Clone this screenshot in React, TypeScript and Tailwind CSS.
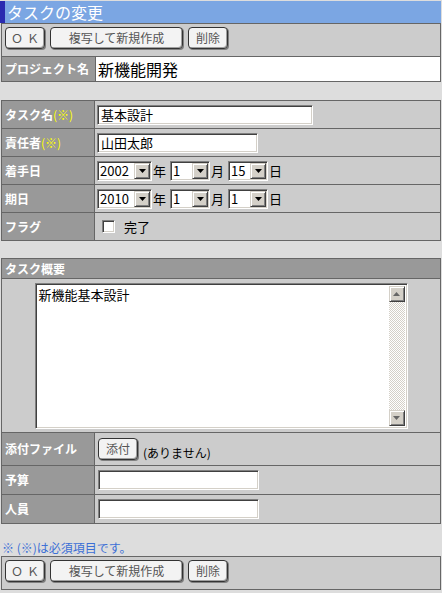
import type { ReactNode } from 'react'

const sunken =
  'bg-white border border-t-[#808080] border-l-[#808080] border-b-white border-r-white shadow-[inset_1px_1px_0_#404040,inset_-1px_-1px_0_#d4d0c8]'
const raised =
  'bg-[#d4d0c8] border border-t-[#d4d0c8] border-l-[#d4d0c8] border-b-[#404040] border-r-[#404040] shadow-[inset_1px_1px_0_#ffffff,inset_-1px_-1px_0_#808080]'

function Btn({ children, w }: { children: ReactNode; w: string }) {
  return (
    <button
      className={`${w} h-[22px] rounded-[4px] border border-[#333] bg-[#f3f3f3] shadow-[inset_-1px_-1px_0_#a0a0a0,1px_1px_0_#808080] text-[12px] leading-none text-[#555] flex items-center justify-center`}
    >
      {children}
    </button>
  )
}

function Toolbar() {
  return (
    <div className="flex gap-[5px] pl-[3px] pt-[3px] h-[32px]">
      <Btn w="w-[40px]">
        <span className="tracking-[4px] pl-[4px]">ＯＫ</span>
      </Btn>
      <Btn w="w-[133px]">複写して新規作成</Btn>
      <Btn w="w-[40px]">削除</Btn>
    </div>
  )
}

function Arrow({ up, color = '#000' }: { up?: boolean; color?: string }) {
  return (
    <svg width="7" height="4" viewBox="0 0 7 4">
      <polygon points={up ? '3.5,0 7,4 0,4' : '0,0 7,0 3.5,4'} fill={color} />
    </svg>
  )
}

function Select({ value, w }: { value: string; w: string }) {
  return (
    <div className={`${w} h-[20px] flex ${sunken} p-[1px]`}>
      <span className="flex-1 pl-[1px] text-[13px] leading-[16px] text-black">{value}</span>
      <span className={`w-[16px] h-[16px] ${raised} flex items-center justify-center`}>
        <Arrow />
      </span>
    </div>
  )
}

function DateRow({ y, m, d }: { y: string; m: string; d: string }) {
  return (
    <div className="flex items-center pl-[2px]">
      <Select value={y} w="w-[55px]" />
      <span className="ml-[1px] mr-[4px]">年</span>
      <Select value={m} w="w-[40px]" />
      <span className="ml-[1px] mr-[4px]">月</span>
      <Select value={d} w="w-[40px]" />
      <span className="ml-[1px]">日</span>
    </div>
  )
}

function Label({ children, h = 'h-[27px]' }: { children: ReactNode; h?: string }) {
  return (
    <div
      className={`w-[93px] ${h} shrink-0 bg-[#999999] border-r border-[#666] flex items-center pl-[3px] text-white font-bold text-[12px]`}
    >
      {children}
    </div>
  )
}

function Req() {
  return <span className="text-[#ffff00] font-normal">(※)</span>
}

export default function App() {
  return (
    <div className="w-[442px] h-[593px] bg-[#dddddd] pt-px font-['Noto_Sans_CJK_JP','Noto_Sans_CJK_JP',sans-serif] overflow-hidden">
      {/* title */}
      <div className="w-[441px] h-[22px] bg-[#7ba6e3] border-l-[5px] border-[#2a2ab0] flex items-center pl-[2px] text-white text-[16px] leading-none">
        タスクの変更
      </div>

      {/* top toolbar + project */}
      <div className="ml-px w-[440px] border border-[#666] bg-[#cccccc]">
        <Toolbar />
        <div className="flex border-t border-[#666] h-[25px]">
          <div className="w-[94px] shrink-0 bg-[#999999] border-r border-[#666] flex items-center pl-[3px] text-white font-bold text-[12px]">
            プロジェクト名
          </div>
          <div className="flex-1 bg-white flex items-center pl-[2px] text-[16px] text-black">新機能開発</div>
        </div>
      </div>

      {/* main table */}
      <div className="ml-px mt-[18px] w-[440px] border border-[#666] bg-[#cccccc] text-[13px] text-black">
        <div className="flex border-b border-[#666]">
          <Label>
            タスク名<Req />
          </Label>
          <div className="flex items-center pl-[2px]">
            <div className={`w-[216px] h-[20px] ${sunken} pl-[3px] text-[13px] leading-[17px]`}>基本設計</div>
          </div>
        </div>
        <div className="flex border-b border-[#666]">
          <Label>
            責任者<Req />
          </Label>
          <div className="flex items-center pl-[2px]">
            <div className={`w-[161px] h-[20px] ${sunken} pl-[3px] text-[13px] leading-[17px]`}>山田太郎</div>
          </div>
        </div>
        <div className="flex border-b border-[#666]">
          <Label>着手日</Label>
          <DateRow y="2002" m="1" d="15" />
        </div>
        <div className="flex border-b border-[#666]">
          <Label>期日</Label>
          <DateRow y="2010" m="1" d="1" />
        </div>
        <div className="flex">
          <Label>フラグ</Label>
          <div className="flex items-center pl-[7px] gap-[9px]">
            <span className={`w-[13px] h-[13px] ${sunken}`} />
            <span>完了</span>
          </div>
        </div>
      </div>

      {/* overview table */}
      <div className="ml-px mt-[17px] w-[440px] border border-[#666] bg-[#cccccc] text-[13px] text-black">
        <div className="h-[20px] bg-[#999999] border-b border-[#666] flex items-center pl-[3px] text-white font-bold text-[12px]">
          タスク概要
        </div>
        <div className="h-[154px] border-b border-[#666] flex justify-center pt-[4px]">
          <div className={`w-[373px] h-[146px] ${sunken} flex p-[2px]`}>
            <div className="flex-1 pl-[1px] pt-[1px] text-[13px] leading-[16px]">新機能基本設計</div>
            <div className="w-[16px] flex flex-col">
              <span className={`h-[16px] ${raised} flex items-center justify-center`}>
                <Arrow up color="#666" />
              </span>
              <span className="flex-1 bg-[repeating-conic-gradient(#d4d0c8_0_25%,#ffffff_0_50%)] bg-[length:2px_2px]" />
              <span className={`h-[16px] ${raised} flex items-center justify-center`}>
                <Arrow color="#666" />
              </span>
            </div>
          </div>
        </div>
        <div className="flex border-b border-[#666]">
          <Label h="h-[32px]">添付ファイル</Label>
          <div className="flex items-center pl-[3px]">
            <Btn w="w-[40px]">添付</Btn>
            <span className="ml-[5px] mt-[8px] text-[12px]">(ありません)</span>
          </div>
        </div>
        <div className="flex border-b border-[#666]">
          <Label h="h-[28px]">予算</Label>
          <div className="flex items-center pl-[3px]">
            <div className={`w-[161px] h-[20px] ${sunken}`} />
          </div>
        </div>
        <div className="flex">
          <Label h="h-[28px]">人員</Label>
          <div className="flex items-center pl-[3px]">
            <div className={`w-[161px] h-[20px] ${sunken}`} />
          </div>
        </div>
      </div>

      <div className="mt-[16px] h-[16px] leading-[16px] pl-[2px] text-[12px] text-[#3b6fd6]">
        ※ (※)は必須項目です。
      </div>

      {/* bottom toolbar */}
      <div className="ml-px w-[440px] border border-[#666] bg-[#cccccc]">
        <Toolbar />
      </div>
    </div>
  )
}
